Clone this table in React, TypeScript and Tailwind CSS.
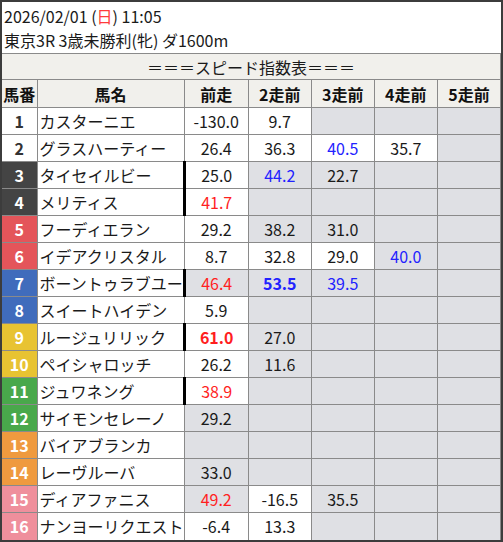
type Cell = { v?: string; g?: boolean; c?: "r" | "b"; bold?: boolean };
type Row = { no: number; name: string; thick?: boolean; cells: Cell[] };

const G: Cell = { g: true };

const rows: Row[] = [
  { no: 1, name: "カスターニエ", cells: [{ v: "-130.0" }, { v: "9.7" }, G, G, G] },
  { no: 2, name: "グラスハーティー", cells: [{ v: "26.4" }, { v: "36.3" }, { v: "40.5", c: "b" }, { v: "35.7" }, G] },
  { no: 3, name: "タイセイルビー", thick: true, cells: [{ v: "25.0" }, { v: "44.2", g: true, c: "b" }, { v: "22.7", g: true }, G, G] },
  { no: 4, name: "メリティス", thick: true, cells: [{ v: "41.7", c: "r" }, G, G, G, G] },
  { no: 5, name: "フーディエラン", cells: [{ v: "29.2" }, { v: "38.2", g: true }, { v: "31.0", g: true }, G, G] },
  { no: 6, name: "イデアクリスタル", cells: [{ v: "8.7" }, { v: "32.8" }, { v: "29.0" }, { v: "40.0", g: true, c: "b" }, G] },
  { no: 7, name: "ボーントゥラブユー", thick: true, cells: [{ v: "46.4", g: true, c: "r" }, { v: "53.5", g: true, c: "b", bold: true }, { v: "39.5", g: true, c: "b" }, G, G] },
  { no: 8, name: "スイートハイデン", cells: [{ v: "5.9" }, G, G, G, G] },
  { no: 9, name: "ルージュリリック", thick: true, cells: [{ v: "61.0", c: "r", bold: true }, { v: "27.0", g: true }, G, G, G] },
  { no: 10, name: "ペイシャロッチ", cells: [{ v: "26.2" }, { v: "11.6", g: true }, G, G, G] },
  { no: 11, name: "ジュワネング", thick: true, cells: [{ v: "38.9", c: "r" }, G, G, G, G] },
  { no: 12, name: "サイモンセレーノ", cells: [{ v: "29.2", g: true }, G, G, G, G] },
  { no: 13, name: "バイアブランカ", cells: [G, G, G, G, G] },
  { no: 14, name: "レーヴルーバ", cells: [{ v: "33.0", g: true }, G, G, G, G] },
  { no: 15, name: "ディアファニス", cells: [{ v: "49.2", g: true, c: "r" }, { v: "-16.5" }, { v: "35.5", g: true }, G, G] },
  { no: 16, name: "ナンヨーリクエスト", cells: [{ v: "-6.4" }, { v: "13.3" }, G, G, G] },
];

// 枠色
const wakuClass = (no: number) => {
  if (no <= 2) return "bg-white text-[#333]";
  if (no <= 4) return "bg-[#444444] text-white";
  if (no <= 6) return "bg-[#e4555a] text-white";
  if (no <= 8) return "bg-[#406cbc] text-white";
  if (no <= 10) return "bg-[#e8c332] text-white";
  if (no <= 12) return "bg-[#49a84b] text-white";
  if (no <= 14) return "bg-[#ef9a3f] text-white";
  return "bg-[#ef8f9c] text-white";
};

const td = "border border-[#8a8a8a] p-0 h-[27px] leading-[24px]";
const th = "border border-[#8a8a8a] p-0 h-[28px] leading-[24px] text-center";

export default function App() {
  return (
    <div className="w-[503px] border-2 border-[#3c3c3c] bg-white font-['Noto_Sans_CJK_JP',sans-serif] text-[16px] text-[#1a1a1a]">
      <div className="pl-[2px] pt-[2px] pb-[1px] leading-[24px]">
        <div>
          2026/02/01 (<span className="text-[#ff3b3b]">日</span>) 11:05
        </div>
        <div>東京3R 3歳未勝利(牝) ダ1600m</div>
      </div>
      <table className="w-full table-fixed border-collapse">
        <colgroup>
          <col className="w-[35px]" />
          <col className="w-[147px]" />
          <col className="w-[64px]" />
          <col className="w-[63px]" />
          <col className="w-[63px]" />
          <col className="w-[63px]" />
          <col className="w-[63px]" />
        </colgroup>
        <tbody>
          <tr>
            <td colSpan={7} className="border border-l-0 border-[#8a8a8a] bg-[#f1f0ec] p-0 h-[26px] leading-[24px] text-center">
              ＝＝＝スピード指数表＝＝＝
            </td>
          </tr>
          <tr className="bg-[#f1f0ec] font-bold text-[#111]">
            <td className={`${th} border-l-0`}>馬番</td>
            <td className={th}>馬名</td>
            <td className={th}>前走</td>
            <td className={th}>2走前</td>
            <td className={th}>3走前</td>
            <td className={th}>4走前</td>
            <td className={th}>5走前</td>
          </tr>
          {rows.map((r, ri) => {
            const last = ri === rows.length - 1 ? "border-b-0" : "";
            return (
              <tr key={r.no}>
                <td className={`${td} ${last} border-l-0 text-center font-bold ${wakuClass(r.no)}`}>{r.no}</td>
                <td className={`${td} ${last} bg-white pl-[2px] whitespace-nowrap overflow-hidden`}>{r.name}</td>
                {r.cells.map((c, ci) => (
                  <td
                    key={ci}
                    className={`${td} ${last} text-center ${c.g ? "bg-[#dfe0e4]" : "bg-white"} ${
                      c.c === "r" ? "text-[#ff1f1f]" : c.c === "b" ? "text-[#2222ff]" : ""
                    } ${c.bold ? "font-bold" : ""} ${ci === 0 && r.thick ? "border-l-[3px] border-l-black" : ""}`}
                  >
                    {c.v ?? ""}
                  </td>
                ))}
              </tr>
            );
          })}
        </tbody>
      </table>
    </div>
  );
}
